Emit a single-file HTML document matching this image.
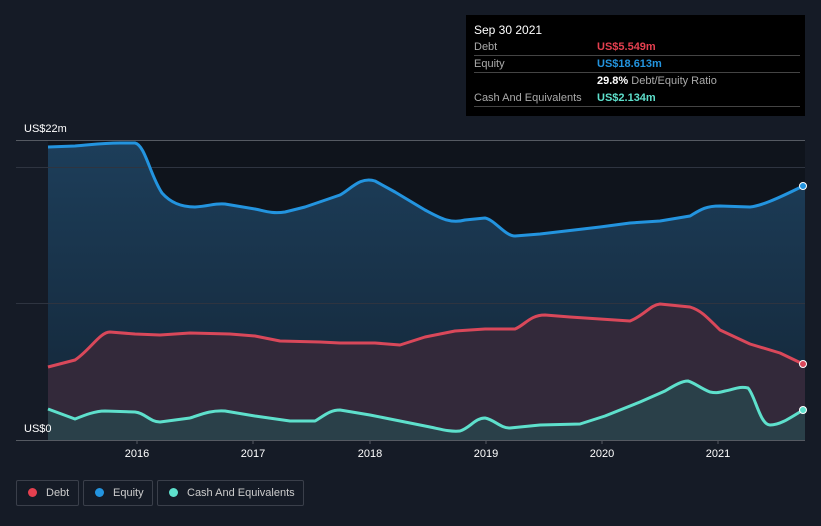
<!DOCTYPE html><html><head><style>
body{margin:0;background:#151b26;width:821px;height:526px;overflow:hidden;font-family:"Liberation Sans",sans-serif}
.tt{position:absolute;left:466px;top:15px;width:339px;height:101px;background:#000;color:#fff;font-size:11px}
.row{position:absolute;left:8px;width:326px;border-bottom:1px solid #444;height:16px;line-height:16px}
.row span{position:absolute;left:123px}
.lg{position:absolute;top:480px;height:26px;border:1px solid #3a3f4a;border-radius:2px;color:#ccc;font-size:11px;line-height:24px;box-sizing:border-box;white-space:nowrap}
.lg i{display:inline-block;width:9px;height:9px;border-radius:50%;margin:0 9px 0 11px;vertical-align:-1px}
</style></head><body>
<svg width="821" height="526" style="position:absolute;left:0;top:0">
<defs><linearGradient id="g" x1="0" y1="0" x2="0" y2="1"><stop offset="0" stop-color="#1d3e5a"/><stop offset="1" stop-color="#132536"/></linearGradient></defs>
<rect x="48" y="140" width="757" height="300" fill="#0f141c"/>
<path d="M48,147 L75,146 C90,145 100,143 120,143 L135,143 C145,145 150,175 162,193 C170,202 180,207 195,207 C210,206 215,203 225,204 L255,209 C265,211 272,214 285,212 L305,207 L340,195 C350,190 360,176 375,181 L395,192 L425,210 C440,218 450,224 465,220 L485,218 C495,220 505,236 515,236 L540,234 L600,227 L630,223 L660,221 L690,216 C700,210 705,206 720,206 L750,207 C760,206 775,200 803,186 L805,186 L805,440 L48,440Z" fill="url(#g)"/>
<path d="M48,367 L75,360 C90,350 100,332 110,332 L135,334 L160,335 L190,333 L230,334 L255,336 L280,341 L320,342 L340,343 L375,343 L400,345 L425,337 L455,331 L485,329 L515,329 C525,325 530,315 545,315 L570,317 L600,319 L630,321 C645,315 650,305 660,304 L690,307 C700,310 705,315 720,330 L750,344 L780,353 L803,364 L805,364 L805,440 L48,440Z" fill="#33293a"/>
<path d="M48,409 L75,419 C85,415 95,411 105,411 L135,412 C145,413 150,422 160,422 L190,418 C200,415 210,410 225,411 L255,416 L290,421 L315,421 C325,415 330,410 340,410 L370,415 L400,421 L430,427 C440,429 450,432 460,431 C470,428 475,418 485,418 C495,420 500,428 510,428 L540,425 L580,424 L605,416 L640,402 L665,391 C675,385 682,381 688,381 C695,383 700,388 710,392 C715,393 718,393 725,391 C735,389 740,386 748,388 C755,395 760,425 770,425 C780,425 790,418 803,410 L805,410 L805,440 L48,440Z" fill="#2a4049"/>
<line x1="16" y1="140.5" x2="805" y2="140.5" stroke="#555a62"/>
<line x1="16" y1="167.5" x2="805" y2="167.5" stroke="#2e3440"/>
<line x1="16" y1="303.5" x2="805" y2="303.5" stroke="#2e3440"/>
<line x1="16" y1="440.5" x2="805" y2="440.5" stroke="#555a62"/>
<g stroke-width="3" fill="none" stroke-linejoin="round">
<path d="M48,147 L75,146 C90,145 100,143 120,143 L135,143 C145,145 150,175 162,193 C170,202 180,207 195,207 C210,206 215,203 225,204 L255,209 C265,211 272,214 285,212 L305,207 L340,195 C350,190 360,176 375,181 L395,192 L425,210 C440,218 450,224 465,220 L485,218 C495,220 505,236 515,236 L540,234 L600,227 L630,223 L660,221 L690,216 C700,210 705,206 720,206 L750,207 C760,206 775,200 803,186" stroke="#2394df"/>
<path d="M48,367 L75,360 C90,350 100,332 110,332 L135,334 L160,335 L190,333 L230,334 L255,336 L280,341 L320,342 L340,343 L375,343 L400,345 L425,337 L455,331 L485,329 L515,329 C525,325 530,315 545,315 L570,317 L600,319 L630,321 C645,315 650,305 660,304 L690,307 C700,310 705,315 720,330 L750,344 L780,353 L803,364" stroke="#d9485a"/>
<path d="M48,409 L75,419 C85,415 95,411 105,411 L135,412 C145,413 150,422 160,422 L190,418 C200,415 210,410 225,411 L255,416 L290,421 L315,421 C325,415 330,410 340,410 L370,415 L400,421 L430,427 C440,429 450,432 460,431 C470,428 475,418 485,418 C495,420 500,428 510,428 L540,425 L580,424 L605,416 L640,402 L665,391 C675,385 682,381 688,381 C695,383 700,388 710,392 C715,393 718,393 725,391 C735,389 740,386 748,388 C755,395 760,425 770,425 C780,425 790,418 803,410" stroke="#5ee0cc"/>
</g>
<circle cx="803" cy="186" r="3.5" fill="#2394df" stroke="#fff" stroke-width="1"/>
<circle cx="803" cy="364" r="3.5" fill="#d9485a" stroke="#fff" stroke-width="1"/>
<circle cx="803" cy="410" r="3.5" fill="#5ee0cc" stroke="#fff" stroke-width="1"/>
<g fill="#fff" font-size="11" font-family="Liberation Sans">
<text x="24" y="132">US$22m</text><text x="24" y="432">US$0</text>
<g text-anchor="middle"><text x="137" y="457">2016</text><text x="253" y="457">2017</text><text x="370" y="457">2018</text><text x="486" y="457">2019</text><text x="602" y="457">2020</text><text x="718" y="457">2021</text></g>
</g>
<g stroke="#555a62"><line x1="137" y1="440" x2="137" y2="444"/><line x1="253" y1="440" x2="253" y2="444"/><line x1="370" y1="440" x2="370" y2="444"/><line x1="486" y1="440" x2="486" y2="444"/><line x1="602" y1="440" x2="602" y2="444"/><line x1="718" y1="440" x2="718" y2="444"/></g>
</svg>
<div class="tt">
<div style="position:absolute;left:8px;top:8px;font-size:12px">Sep 30 2021</div>
<div class="row" style="top:24px;color:#aaa">Debt<span style="color:#e5404f;font-weight:bold">US$5.549m</span></div>
<div class="row" style="top:41px;color:#aaa">Equity<span style="color:#2394df;font-weight:bold">US$18.613m</span></div>
<div class="row" style="top:58px;border:none;color:#aaa"><span><b style="color:#fff">29.8%</b> Debt/Equity Ratio</span></div>
<div class="row" style="top:75px;color:#aaa">Cash And Equivalents<span style="color:#5ee0cc;font-weight:bold">US$2.134m</span></div>
</div>
<div class="lg" style="left:16px;width:63px"><i style="background:#e5404f"></i>Debt</div>
<div class="lg" style="left:83px;width:70px"><i style="background:#2394df"></i>Equity</div>
<div class="lg" style="left:157px;width:147px"><i style="background:#5ee0cc"></i>Cash And Equivalents</div>
</body></html>
